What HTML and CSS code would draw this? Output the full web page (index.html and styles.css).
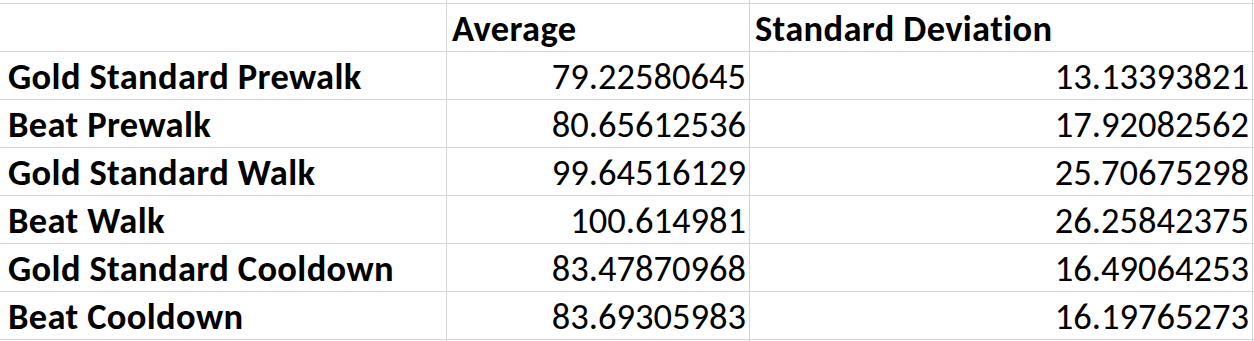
FILE: index.html
```html
<!DOCTYPE html>
<html>
<head>
<meta charset="utf-8">
<link rel="stylesheet" href="styles.css">
</head>
<body>
<div class="sheet">
  <div class="cell"></div><div class="cell"></div><div class="cell"></div><div class="cell"></div><div class="cell"></div>

  <div class="cell"></div><div class="cell"></div><div class="cell head">Average</div><div class="cell head">Standard Deviation</div><div class="cell"></div>

  <div class="cell"></div><div class="cell label">Gold Standard Prewalk</div><div class="cell num">79.22580645</div><div class="cell num">13.13393821</div><div class="cell"></div>

  <div class="cell"></div><div class="cell label">Beat Prewalk</div><div class="cell num">80.65612536</div><div class="cell num">17.92082562</div><div class="cell"></div>

  <div class="cell"></div><div class="cell label">Gold Standard Walk</div><div class="cell num">99.64516129</div><div class="cell num">25.70675298</div><div class="cell"></div>

  <div class="cell"></div><div class="cell label">Beat Walk</div><div class="cell num">100.614981</div><div class="cell num">26.25842375</div><div class="cell"></div>

  <div class="cell"></div><div class="cell label">Gold Standard Cooldown</div><div class="cell num">83.47870968</div><div class="cell num">16.49064253</div><div class="cell"></div>

  <div class="cell"></div><div class="cell label">Beat Cooldown</div><div class="cell num">83.69305983</div><div class="cell num">16.19765273</div><div class="cell"></div>

  <div class="cell"></div><div class="cell"></div><div class="cell"></div><div class="cell"></div><div class="cell"></div>
</div>
</body>
</html>
```
FILE: styles.css
```css
html, body {
  margin: 0;
  padding: 0;
  background: #ffffff;
  overflow: hidden;
}

.sheet {
  display: grid;
  grid-template-columns: 2px 443px 302px 502px 10px;
  grid-auto-rows: 47px;
  gap: 1px;
  background: #d4d4d4;
  margin-top: -44px;
  font-family: "Carlito", "Lato", "Liberation Sans", sans-serif;
  font-size: 36.5px;
  color: #000000;
}

.cell {
  background: #ffffff;
  display: flex;
  align-items: flex-end;
  line-height: 1;
  padding: 0 4px 4px 5px;
  white-space: nowrap;
  box-sizing: border-box;
}

.head,
.label {
  font-weight: 700;
  letter-spacing: 0.35px;
}

.num {
  justify-content: flex-end;
  padding-right: 3px;
}
```
